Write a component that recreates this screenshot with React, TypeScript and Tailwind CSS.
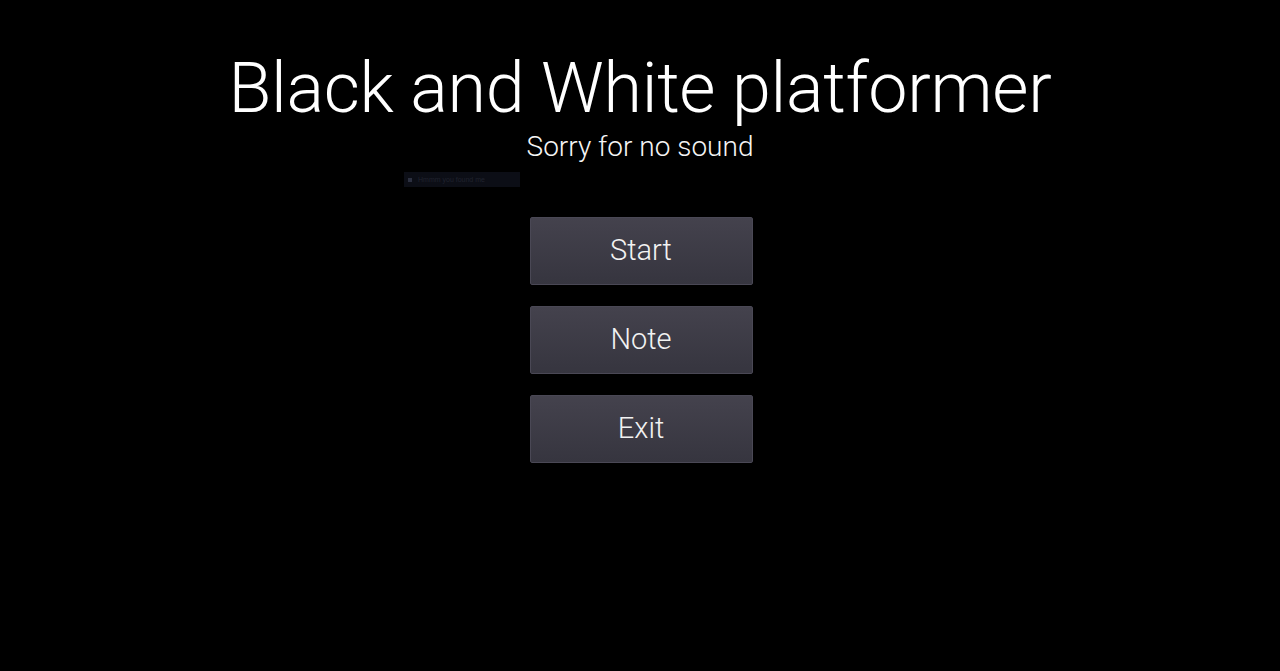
import React from 'react';

const menuItems = ['Start', 'Note', 'Exit'];

const MenuButton: React.FC<{ label: string }> = ({ label }) => (
  <button className="w-[223px] h-[68px] flex items-center justify-center rounded-[2px] border border-[#4a4855] bg-gradient-to-b from-[#44424d] to-[#36353f] text-[29px] text-[#f2f2f2] font-['Roboto',sans-serif] font-light">
    {label}
  </button>
);

export default function App() {
  return (
    <div className="w-full h-[671px] bg-black flex flex-col items-center font-['Roboto',sans-serif] text-white">
      <h1 className="mt-[43px] text-[70px] leading-[90px] font-light tracking-[-0.3px]">
        Black and White platformer
      </h1>
      <p className="-mt-[3px] text-[28px] leading-[34px] font-light text-[#f5f5f5]">Sorry for no sound</p>

      {/* tiny debug strip under the subtitle */}
      <div className="self-start ml-[404px] mt-[8px] w-[116px] h-[15px] bg-[#0c0e16] flex items-center gap-[6px] px-[4px]">
        <span className="w-[4px] h-[4px] bg-[#2c3040]" />
        <span className="text-[7px] leading-none text-[#20232e] font-['Liberation_Sans',sans-serif]">Hmmm you found me</span>
      </div>

      <div className="mt-[30px] ml-[2px] flex flex-col gap-[21px]">
        {menuItems.map((item) => (
          <MenuButton key={item} label={item} />
        ))}
      </div>
    </div>
  );
}
